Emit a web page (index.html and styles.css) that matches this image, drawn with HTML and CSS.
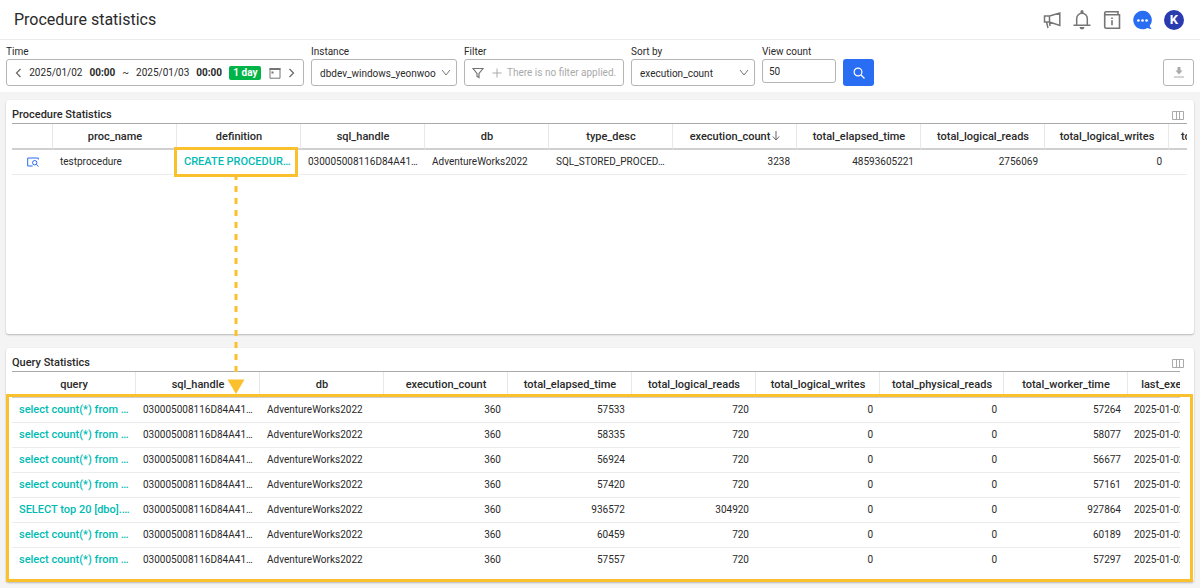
FILE: index.html
```html
<!DOCTYPE html>
<html lang="en">
<head>
<meta charset="utf-8">
<title>Procedure statistics</title>
<link rel="stylesheet" href="styles.css">
</head>
<body>
<header class="topbar">
  <h1 class="title">Procedure statistics</h1>
  <nav class="top-actions">
    <button class="icon-btn" aria-label="Announcements"><svg width="18" height="18" viewBox="0 0 18 18" fill="none" stroke="#757575" stroke-width="1.5"><path d="M1.500 5h5L16.800 2v12.500L6.500 11h-5zM6.500 5v6M3.500 11l1.500 6M6.500 11l.5 4"/></svg></button>
    <button class="icon-btn" aria-label="Notifications"><svg width="18" height="20" viewBox="0 0 18 20"><path d="M3.700 15V8.500a5.300 5.300 0 0 1 10.600 0V15M.5 15.200h17" fill="none" stroke="#757575" stroke-width="1.500"/><path d="M7.500 3V1.500a1.500 1.500 0 0 1 3 0V3zM6.500 17h5a2.500 2.500 0 0 1-5 0z" fill="#757575"/></svg></button>
    <button class="icon-btn" aria-label="Release notes"><svg width="18" height="20" viewBox="0 0 18 20" fill="none" stroke="#757575" stroke-width="1.600"><path d="M15 5V1.800H3.200a1.500 1.500 0 0 0-1.500 1.500v13.500a1.500 1.500 0 0 0 1.500 1.500h13.300V4.800H3.200a1.500 1.500 0 0 1-1.500-1.500M9 10.200v5M9 7.500v1.500"/></svg></button>
    <button class="icon-btn" aria-label="Chat"><svg width="19" height="20" viewBox="0 0 20 20"><path d="M10 .3a9.700 9.700 0 1 0 5 18l4.500 1.400-2-3.500A9.700 9.700 0 0 0 10 .3z" fill="#296df2"/><g fill="#fff"><circle cx="5.700" cy="10.500" r="1.400"/><circle cx="10" cy="10.500" r="1.400"/><circle cx="14.300" cy="10.500" r="1.400"/></g></svg></button>
    <button class="avatar" aria-label="Account">K</button>
  </nav>
</header>

<form class="filters">
  <div class="field field-time">
    <span class="label">Time</span>
    <div class="box time-box">
      <button type="button" class="icon-btn" aria-label="Previous"><svg width="7" height="10" viewBox="0 0 7 10" fill="none" stroke="#666" stroke-width="1.200"><path d="M5.500 1 1.500 5l4 4"/></svg></button>
      <span class="range"><span>2025/01/02</span><b>00:00</b><span>~</span><span>2025/01/03</span><b>00:00</b></span>
      <span class="badge">1 day</span>
      <button type="button" class="icon-btn" aria-label="Calendar"><svg width="12" height="12" viewBox="0 0 12 12"><path d="M1 1.500h10v9.700H1z" fill="none" stroke="#757575"/><path d="M.5 1h11v2H.5zM2.500 4.500h2v2h-2z" fill="#757575"/></svg></button>
      <button type="button" class="icon-btn" aria-label="Next"><svg width="7" height="10" viewBox="0 0 7 10" fill="none" stroke="#666" stroke-width="1.200"><path d="m1.500 1 4 4-4 4"/></svg></button>
    </div>
  </div>
  <div class="field field-instance">
    <label class="label" for="instance">Instance</label>
    <div class="select-wrap">
      <select id="instance" class="box select"><option>dbdev_windows_yeonwoo</option></select>
      <svg class="chevron" width="10" height="7" viewBox="0 0 10 7" fill="none" stroke="#777"><path d="m1 1 4 5 4-5"/></svg>
    </div>
  </div>
  <div class="field field-filter">
    <span class="label">Filter</span>
    <button type="button" class="box filter-box">
      <svg width="12" height="12" viewBox="0 0 12 12" fill="none" stroke="#757575" stroke-width="1.200"><path d="M1 1.500h10L7 6.500v4L5 9.500v-3z"/></svg>
      <svg class="plus" width="10" height="10" viewBox="0 0 10 10" fill="none" stroke="#aaa"><path d="M5 .5v9M.5 5h9"/></svg>
      <span>There is no filter applied.</span>
    </button>
  </div>
  <div class="field field-sort">
    <label class="label" for="sort">Sort by</label>
    <div class="select-wrap">
      <select id="sort" class="box select"><option>execution_count</option></select>
      <svg class="chevron" width="10" height="7" viewBox="0 0 10 7" fill="none" stroke="#777"><path d="m1 1 4 5 4-5"/></svg>
    </div>
  </div>
  <div class="field field-count">
    <label class="label" for="count">View count</label>
    <input id="count" class="box count" type="text" value="50">
  </div>
  <button type="button" class="search" aria-label="Search"><svg width="12" height="12" viewBox="0 0 12 12" fill="none" stroke="#fff" stroke-width="1.200"><circle cx="5" cy="5" r="3.900"/><path d="m8 8 3.500 3.500"/></svg></button>
  <button type="button" class="download" aria-label="Download"><svg width="10" height="11" viewBox="0 0 10 11" fill="#aaa"><path d="M3.500 0h3v3.500h2L5 7.500l-3.500-4h2zM0 9.500h10v1H0z"/></svg></button>
</form>

<main class="content">
  <section class="panel">
    <div class="panel-head">
      <h2 class="panel-title">Procedure Statistics</h2>
      <button class="icon-btn" aria-label="Columns"><svg width="12" height="9" viewBox="0 0 12 9" fill="none" stroke="#aaa"><path d="M.5.5h11v8H.5zM4.500.5v8M7.500.5v8"/></svg></button>
    </div>
    <div class="table-wrap">
      <table class="grid grid-proc">
        <colgroup><col class="col-icon"><col span="10"></colgroup>
        <thead><tr><th></th><th>proc_name</th><th>definition</th><th>sql_handle</th><th>db</th><th>type_desc</th><th>execution_count<svg class="sort" width="8" height="10" viewBox="0 0 8 10" fill="none" stroke="#666"><path d="M4 0v9M.8 5.500 4 9l3.200-3.500"/></svg></th><th>total_elapsed_time</th><th>total_logical_reads</th><th>total_logical_writes</th><th>total_physical_reads</th></tr></thead>
        <tbody><tr>
          <td class="center"><button class="icon-btn" aria-label="Details"><svg width="12" height="10" viewBox="0 0 12 10" fill="none" stroke="#296df2"><path d="M11.300 2.500V1H.7v8h5M11.500 9.500 9.300 7.500"/><circle cx="7.700" cy="5.700" r="2.200"/></svg></button></td>
          <td>testprocedure</td><td><a class="link" href="#">CREATE PROCEDUR…</a></td><td>030005008116D84A41…</td><td>AdventureWorks2022</td><td>SQL_STORED_PROCED…</td><td class="num">3238</td><td class="num">48593605221</td><td class="num">2756069</td><td class="num">0</td><td></td>
        </tr></tbody>
      </table>
    </div>
  </section>

  <section class="panel">
    <div class="panel-head">
      <h2 class="panel-title">Query Statistics</h2>
      <button class="icon-btn" aria-label="Columns"><svg width="12" height="9" viewBox="0 0 12 9" fill="none" stroke="#aaa"><path d="M.5.5h11v8H.5zM4.500.5v8M7.500.5v8"/></svg></button>
    </div>
    <div class="table-wrap table-wrap-scroll">
      <table class="grid grid-query">
        <thead><tr><th>query</th><th>sql_handle</th><th>db</th><th>execution_count</th><th>total_elapsed_time</th><th>total_logical_reads</th><th>total_logical_writes</th><th>total_physical_reads</th><th>total_worker_time</th><th>last_execution_time</th></tr></thead>
        <tbody>
          <tr><td><a class="link" href="#">select count(*) from …</a></td><td>030005008116D84A41…</td><td>AdventureWorks2022</td><td class="num">360</td><td class="num">57533</td><td class="num">720</td><td class="num">0</td><td class="num">0</td><td class="num">57264</td><td class="date">2025-01-02</td></tr>
          <tr><td><a class="link" href="#">select count(*) from …</a></td><td>030005008116D84A41…</td><td>AdventureWorks2022</td><td class="num">360</td><td class="num">58335</td><td class="num">720</td><td class="num">0</td><td class="num">0</td><td class="num">58077</td><td class="date">2025-01-02</td></tr>
          <tr><td><a class="link" href="#">select count(*) from …</a></td><td>030005008116D84A41…</td><td>AdventureWorks2022</td><td class="num">360</td><td class="num">56924</td><td class="num">720</td><td class="num">0</td><td class="num">0</td><td class="num">56677</td><td class="date">2025-01-02</td></tr>
          <tr><td><a class="link" href="#">select count(*) from …</a></td><td>030005008116D84A41…</td><td>AdventureWorks2022</td><td class="num">360</td><td class="num">57420</td><td class="num">720</td><td class="num">0</td><td class="num">0</td><td class="num">57161</td><td class="date">2025-01-02</td></tr>
          <tr><td><a class="link" href="#">SELECT top 20 [dbo].…</a></td><td>030005008116D84A41…</td><td>AdventureWorks2022</td><td class="num">360</td><td class="num">936572</td><td class="num">304920</td><td class="num">0</td><td class="num">0</td><td class="num">927864</td><td class="date">2025-01-02</td></tr>
          <tr><td><a class="link" href="#">select count(*) from …</a></td><td>030005008116D84A41…</td><td>AdventureWorks2022</td><td class="num">360</td><td class="num">60459</td><td class="num">720</td><td class="num">0</td><td class="num">0</td><td class="num">60189</td><td class="date">2025-01-02</td></tr>
          <tr><td><a class="link" href="#">select count(*) from …</a></td><td>030005008116D84A41…</td><td>AdventureWorks2022</td><td class="num">360</td><td class="num">57557</td><td class="num">720</td><td class="num">0</td><td class="num">0</td><td class="num">57297</td><td class="date">2025-01-02</td></tr>
        </tbody>
      </table>
    </div>
  </section>

  <div class="mark mark-cell"></div>
  <svg class="arrow" width="18" height="217" viewBox="0 0 18 217"><path d="M9 0v196" stroke="#fbc02d" stroke-width="3" stroke-dasharray="6 6" stroke-dashoffset="3"/><path d="M.5 202.500h17L9 217z" fill="#fbc02d"/></svg>
  <div class="mark mark-rows"></div>
</main>
</body>
</html>
```
FILE: styles.css
```css
* { box-sizing: border-box; }
body {
  margin: 0;
  min-height: 100vh;
  display: flex;
  flex-direction: column;
  background: #f4f4f4;
  color: #2a2a2a;
  font: 10px/14px Roboto, "Liberation Sans", sans-serif;
}
button, input, select { font: inherit; color: inherit; margin: 0; }
h1, h2 { margin: 0; }
svg { display: block; flex: none; }
.icon-btn { display: flex; padding: 0; border: 0; background: none; }

.topbar {
  display: flex;
  align-items: center;
  justify-content: space-between;
  height: 40px;
  padding: 0 16px 0 14px;
  background: #fff;
  border-bottom: 1px solid #ececec;
}
.title { font-size: 16px; line-height: 20px; font-weight: 400; }
.top-actions { display: flex; align-items: center; gap: 12px; }
.avatar {
  width: 20px;
  height: 20px;
  padding: 0;
  border: 0;
  border-radius: 50%;
  background: #2a3bb0;
  color: #fff;
  font-size: 13px;
  font-weight: 700;
}

.filters {
  display: flex;
  align-items: flex-start;
  gap: 7px;
  padding: 4px 6px 6px;
  background: #fff;
}
.field { display: flex; flex-direction: column; }
.field-time { width: 298px; }
.field-instance { width: 146px; }
.field-filter { width: 160px; }
.field-sort { width: 124px; }
.field-count { width: 74px; }
.label { line-height: 15px; }
.box {
  width: 100%;
  height: 27px;
  border: 1px solid #b5b5b5;
  border-radius: 3px;
  background: #fff;
}
.time-box {
  display: flex;
  align-items: center;
  justify-content: space-between;
  padding: 0 8px;
}
.range { display: flex; gap: 7px; }
b { font-weight: 700; }
.badge {
  padding: 0 4px;
  border-radius: 2px;
  background: #00b447;
  color: #fff;
  font-weight: 700;
}
.select-wrap { position: relative; }
.select { appearance: none; display: block; padding: 2px 8px 0; }
.chevron { position: absolute; right: 6px; top: 10px; pointer-events: none; }
.filter-box { display: flex; align-items: center; padding: 0 7px; color: #aaa; white-space: nowrap; }
.plus { margin: 0 5px 0 8px; }
.count { height: 24px; padding: 0 6px; }
.search, .download {
  display: flex;
  align-items: center;
  justify-content: center;
  width: 31px;
  height: 27px;
  margin-top: 15px;
  padding: 0;
  border-radius: 3px;
}
.search { border: 0; background: #296df2; }
.download { margin-left: auto; border: 1px solid #b5b5b5; background: #fff; }

.content {
  position: relative;
  flex: 1;
  display: grid;
  grid-auto-rows: minmax(234px, 1fr);
  gap: 14px;
  padding: 8px 6px 6px;
}
.panel {
  min-width: 0;
  padding: 7px 7px 0 6px;
  border-radius: 3px;
  background: #fff;
  box-shadow: 0 1px 2px rgba(0, 0, 0, .25);
}
.panel-head {
  display: flex;
  align-items: center;
  justify-content: space-between;
  height: 16px;
  padding-right: 3px;
}
.panel-title { font-size: 11px; line-height: 14px; font-weight: 500; }
.table-wrap { overflow: hidden; border-top: 1px solid #aaa; }
.table-wrap-scroll { margin-right: 7px; }
.grid { table-layout: fixed; border-collapse: separate; border-spacing: 0; }
.grid-proc { width: 1281px; }
.grid-query { width: 1240px; }
.col-icon { width: 41px; }
.grid th {
  height: 26px;
  padding: 1px 0 0 1px;
  border-right: 1px solid #e8e8e8;
  border-bottom: 2px solid #d0d0d0;
  font-size: 11px;
  font-weight: 500;
}
.grid td {
  height: 25px;
  padding: 0 7px;
  border-bottom: 1px solid #ececec;
  white-space: nowrap;
}
.grid .num { text-align: right; }
.grid .date { padding-left: 6px; }
.grid .center .icon-btn { margin: 0 auto; }
.grid-query tbody tr:last-child td { border-bottom-color: #fff; }
.sort { display: inline-block; margin-left: 2px; vertical-align: -1px; }
.link { color: #00bbb3; font-size: 11px; font-weight: 500; text-decoration: none; }

.mark { position: absolute; border: 3px solid #fbc02d; pointer-events: none; }
.mark-cell { left: 174px; top: 55px; width: 124px; height: 30px; }
.arrow { position: absolute; left: 227px; top: 85px; pointer-events: none; }
.mark-rows { left: 6px; right: 7px; top: 302px; bottom: 6px; }
```
